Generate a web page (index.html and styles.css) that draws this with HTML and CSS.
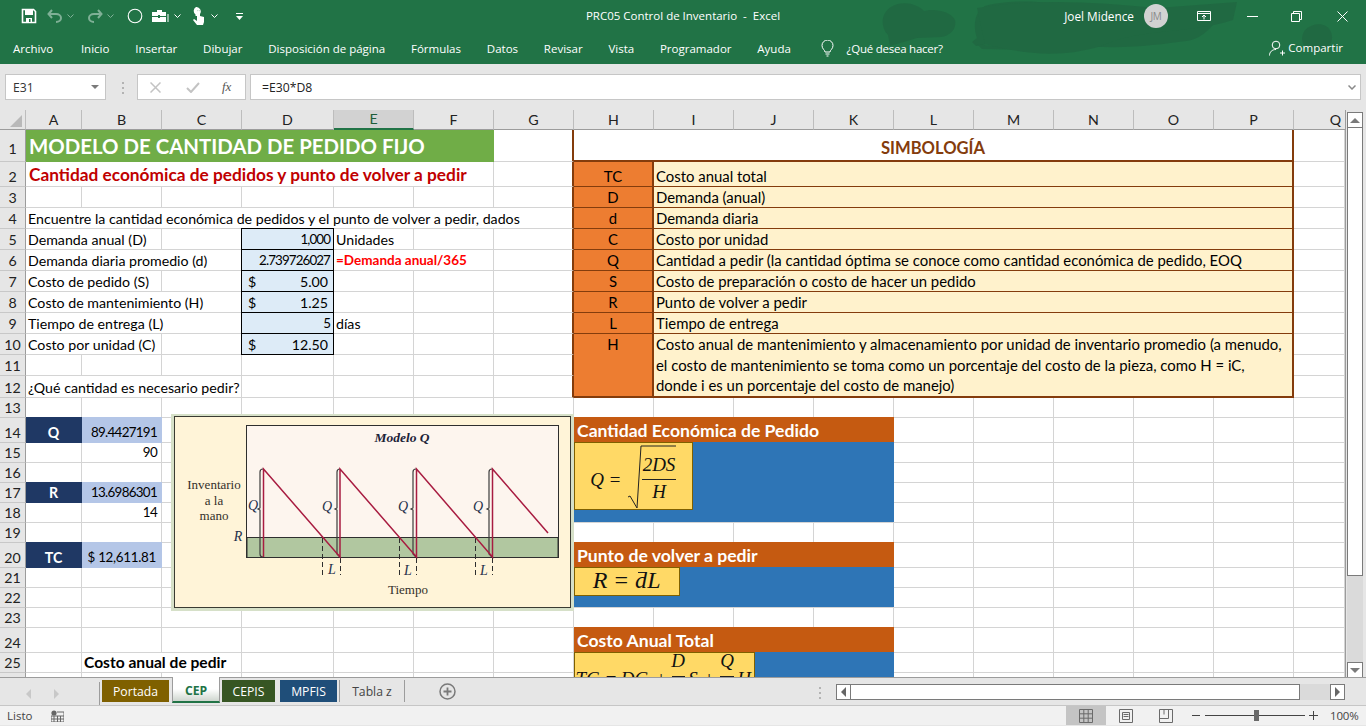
FILE: index.html
```html
<!DOCTYPE html>
<html lang="es">
<head>
<meta charset="utf-8">
<title>PRC05 Control de Inventario - Excel</title>
<link rel="stylesheet" href="styles.css">
</head>
<body>
<div class="app">
  <header class="ribbon">
    <svg class="texture" width="1366" height="64" viewBox="0 0 1366 64" aria-hidden="true">
      <path d="M888 35c-8-8-7-22 3-28 12-7 26-3 33 4 10-3 27 0 31 9 2 9-5 16-14 17l-24 1-27 8z"/>
      <path d="M977 38c-4-10-3-27 8-32 20-6 60-6 75 0 9 6 12 22 8 32l-2 9-30-5-40 1-20 3-4-4z"/>
      <path d="M977 44c20 4 50-1 80 0l8-10c10 9-6 16-28 16l-55-1z"/>
      <path d="M1070 44c30 4 60-6 88-22 14-8 28-18 42-6l22-5c-6 12-18 28-36 30-30 4-72 10-116 3z"/>
      <path d="M977 8c60-10 120-6 180 0l80-6-4 18c-44 14-92 8-132 26-44 14-86 6-116-2z"/>
      <path d="M1305 30c8-8 22-8 26 2 4 10-4 20-14 20-10 0-20-10-12-22z"/>
    </svg>
    <div class="titlebar">
      <div class="qat">
        <svg class="qat-save" width="16" height="16" viewBox="0 0 16 16"><path d="M1.5 1.5h11l2 2v11h-13z" fill="none" stroke="#fff" stroke-width="1.6"/><path d="M4 2h8v5H4zM5 10h6v5H5z" fill="#fff"/><path d="M8 11h1.5v3H8z" fill="#217346"/></svg>
        <svg class="qat-undo" width="16" height="14" viewBox="0 0 16 14"><path d="M5 1 1.5 5 5 9M2 5h7c3 0 5 2 5 4s-2 4-5 4" fill="none" stroke="#7fb096" stroke-width="2"/></svg>
        <svg class="chev" width="7" height="4" viewBox="0 0 7 4"><path d="M.5.5l3 3 3-3" fill="none" stroke="#7fb096"/></svg>
        <svg class="qat-redo" width="16" height="14" viewBox="0 0 16 14"><path d="M11 1l3.5 4L11 9M14 5H7C4 5 2 7 2 9s2 4 5 4" fill="none" stroke="#7fb096" stroke-width="2"/></svg>
        <svg class="chev" width="7" height="4" viewBox="0 0 7 4"><path d="M.5.5l3 3 3-3" fill="none" stroke="#7fb096"/></svg>
        <svg class="qat-circle" width="16" height="16" viewBox="0 0 16 16"><circle cx="8" cy="8" r="6.8" fill="none" stroke="#fff" stroke-width="1.1"/></svg>
        <svg class="qat-case" width="18" height="14" viewBox="0 0 18 14"><path d="M5 3V1h5v2M0 3h14v4H8V6H6v1H0zM0 8h6v1h2V8h6v5H0z" fill="#fff"/><path d="M15.5 5h1v8h-1z" fill="#fff"/></svg>
        <svg class="chev" width="7" height="4" viewBox="0 0 7 4"><path d="M.5.5l3 3 3-3" fill="none" stroke="#fff"/></svg>
        <svg class="qat-touch" width="14" height="18" viewBox="0 0 14 18"><path d="M5 0a4.5 4.5 0 0 1 4 7V4.500a1.500 1.500 0 0 0-3 0V9H4.500V7.500A4.500 4.500 0 0 1 5 0z" fill="#fff"/><path d="M6 4.500a1.500 1.500 0 0 1 3 0V9l4 1v5l-1 3H6L2 13l1-1 3 2z" fill="#fff"/></svg>
        <svg class="chev" width="7" height="4" viewBox="0 0 7 4"><path d="M.5.5l3 3 3-3" fill="none" stroke="#fff"/></svg>
        <svg class="qat-more" width="7" height="7" viewBox="0 0 7 7"><path d="M0 0h7v1H0zM0 3h7L3.500 7z" fill="#fff"/></svg>
      </div>
      <div class="doc-title">PRC05 Control de Inventario &nbsp;-&nbsp; Excel</div>
      <div class="win">
        <span class="user">Joel Midence</span>
        <span class="avatar">JM</span>
        <svg class="win-display" width="14" height="10" viewBox="0 0 14 10"><path d="M.5.5h13v9H.5zM.5 2.500h13M7 8.500V4.500M5 6l2-2 2 2" fill="none" stroke="#fff"/></svg>
        <svg class="win-min" width="11" height="1" viewBox="0 0 11 1"><path d="M0 0h11v1H0z" fill="#fff"/></svg>
        <svg class="win-max" width="11" height="11" viewBox="0 0 11 11"><path d="M.5 2.500h8v8h-8zM2.500 2.500v-2h8v8h-2" fill="none" stroke="#fff"/></svg>
        <svg class="win-close" width="11" height="11" viewBox="0 0 11 11"><path d="M.5.5l10 10M10.500.5l-10 10" stroke="#fff" fill="none"/></svg>
      </div>
    </div>
    <nav class="tabs">
      <span class="t-file">Archivo</span><span>Inicio</span><span>Insertar</span><span>Dibujar</span><span>Disposición de página</span><span>Fórmulas</span><span>Datos</span><span>Revisar</span><span>Vista</span><span>Programador</span><span>Ayuda</span>
      <svg class="bulb" width="13" height="17" viewBox="0 0 13 17"><path d="M4 12c0-2-3-3-3-6.500a5.500 5.500 0 0 1 11 0C12 9 9 10 9 12zM4.500 14h4M5.500 16h2" fill="none" stroke="#fff"/></svg>
      <span class="tell">¿Qué desea hacer?</span>
      <span class="share">
        <svg width="16" height="16" viewBox="0 0 16 16"><circle cx="7" cy="5" r="3.800" fill="none" stroke="#fff"/><path d="M.5 15.500c0-3.500 2.500-6 6.500-6M11 13h5M13.500 10.500v5" fill="none" stroke="#fff"/></svg>
        Compartir
      </span>
    </nav>
  </header>

  <div class="formula-bar">
    <div class="namebox"><span>E31</span><i class="down"></i></div>
    <div class="dots"><i></i><i></i><i></i></div>
    <div class="fx-buttons">
      <svg width="11" height="11" viewBox="0 0 11 11"><path d="M.5.5l10 10M10.500.5l-10 10" stroke="#c3c3c3" stroke-width="1.500" fill="none"/></svg>
      <svg width="14" height="11" viewBox="0 0 14 11"><path d="M1 6l4 4 8-9" stroke="#c3c3c3" stroke-width="2" fill="none"/></svg>
      <span class="fx">fx</span>
    </div>
    <div class="formula"><span>=E30*D8</span>
      <svg width="8" height="5" viewBox="0 0 8 5"><path d="M.5.5l3.500 3.500L7.500.5" stroke="#8a8a8a" stroke-width="1.500" fill="none"/></svg>
    </div>
  </div>

  <div class="workspace">
    <div class="sheet">
      <table class="grid">
        <colgroup><col class="c-rh"><col class="c-a"><col class="c-w"><col class="c-w"><col class="c-d"><col class="c-w"><col class="c-w"><col class="c-w"><col class="c-w"><col class="c-w"><col class="c-w"><col class="c-w"><col class="c-w"><col class="c-w"><col class="c-w"><col class="c-w"><col class="c-w"><col class="c-q"></colgroup>
        <tr class="r-hd">
          <th class="corner"><i></i></th><th>A</th><th>B</th><th>C</th><th>D</th><th class="sel">E</th><th>F</th><th>G</th><th>H</th><th>I</th><th>J</th><th>K</th><th>L</th><th>M</th><th>N</th><th>O</th><th>P</th><th class="q-h">Q</th>
        </tr>
        <tr class="r32"><th class="first">1</th><td colspan="6" class="title">MODELO DE CANTIDAD DE PEDIDO FIJO</td><td class="edge"></td><td colspan="9" class="sym-head">SIMBOLOGÍA</td><td></td></tr>
        <tr class="r25"><th>2</th><td colspan="6" class="subtitle">Cantidad económica de pedidos y punto de volver a pedir</td><td class="edge"></td><td class="sym">TC</td><td colspan="8" class="def">Costo anual total</td><td></td></tr>
        <tr class="r21"><th>3</th><td></td><td></td><td></td><td></td><td></td><td></td><td class="edge"></td><td class="sym">D</td><td colspan="8" class="def">Demanda (anual)</td><td></td></tr>
        <tr class="r21"><th>4</th><td colspan="7" class="txt edge">Encuentre la cantidad económica de pedidos y el punto de volver a pedir, dados</td><td class="sym">d</td><td colspan="8" class="def">Demanda diaria</td><td></td></tr>
        <tr class="r21"><th>5</th><td colspan="2" class="txt">Demanda anual (D)</td><td></td><td class="inp inp-top num">1,000</td><td class="txt">Unidades</td><td></td><td class="edge"></td><td class="sym">C</td><td colspan="8" class="def">Costo por unidad</td><td></td></tr>
        <tr class="r21"><th>6</th><td colspan="3" class="txt">Demanda diaria promedio (d)</td><td class="inp num">2.739726027</td><td colspan="2" class="note">=Demanda anual/365</td><td class="edge"></td><td class="sym">Q</td><td colspan="8" class="def">Cantidad a pedir (la cantidad óptima se conoce como cantidad económica de pedido, EOQ</td><td></td></tr>
        <tr class="r21"><th>7</th><td colspan="2" class="txt">Costo de pedido (S)</td><td></td><td class="inp acc"><span>$</span><span>5.00</span></td><td></td><td></td><td class="edge"></td><td class="sym">S</td><td colspan="8" class="def">Costo de preparación o costo de hacer un pedido</td><td></td></tr>
        <tr class="r21"><th>8</th><td colspan="3" class="txt">Costo de mantenimiento (H)</td><td class="inp acc"><span>$</span><span>1.25</span></td><td></td><td></td><td class="edge"></td><td class="sym">R</td><td colspan="8" class="def">Punto de volver a pedir</td><td></td></tr>
        <tr class="r21"><th>9</th><td colspan="3" class="txt">Tiempo de entrega (L)</td><td class="inp num">5</td><td class="txt">días</td><td></td><td class="edge"></td><td class="sym">L</td><td colspan="8" class="def">Tiempo de entrega</td><td></td></tr>
        <tr class="r21"><th>10</th><td colspan="2" class="txt">Costo por unidad (C)</td><td></td><td class="inp acc"><span>$</span><span>12.50</span></td><td></td><td></td><td class="edge"></td><td rowspan="3" class="sym sym-last">H</td><td colspan="8" rowspan="3" class="def def-last">Costo anual de mantenimiento y almacenamiento por unidad de inventario promedio (a menudo,<br>el costo de mantenimiento se toma como un porcentaje del costo de la pieza, como H = iC,<br>donde i es un porcentaje del costo de manejo)</td><td></td></tr>
        <tr class="r21"><th>11</th><td></td><td></td><td></td><td></td><td></td><td></td><td class="edge"></td><td></td></tr>
        <tr class="r22"><th>12</th><td colspan="3" class="txt">¿Qué cantidad es necesario pedir?</td><td></td><td></td><td></td><td class="edge"></td><td></td></tr>
        <tr class="r20"><th>13</th><td></td><td></td><td></td><td></td><td></td><td></td><td></td><td></td><td></td><td></td><td></td><td></td><td></td><td></td><td></td><td></td><td></td></tr>
        <tr class="r25"><th>14</th><td class="navy">Q</td><td class="pale num">89.4427191</td><td></td><td></td><td></td><td></td><td></td><td></td><td></td><td></td><td></td><td></td><td></td><td></td><td></td><td></td><td></td></tr>
        <tr class="r20"><th>15</th><td></td><td class="num">90</td><td></td><td></td><td></td><td></td><td></td><td></td><td></td><td></td><td></td><td></td><td></td><td></td><td></td><td></td><td></td></tr>
        <tr class="r20"><th>16</th><td></td><td></td><td></td><td></td><td></td><td></td><td></td><td></td><td></td><td></td><td></td><td></td><td></td><td></td><td></td><td></td><td></td></tr>
        <tr class="r20"><th>17</th><td class="navy">R</td><td class="pale num">13.6986301</td><td></td><td></td><td></td><td></td><td></td><td></td><td></td><td></td><td></td><td></td><td></td><td></td><td></td><td></td><td></td></tr>
        <tr class="r20"><th>18</th><td></td><td class="num">14</td><td></td><td></td><td></td><td></td><td></td><td></td><td></td><td></td><td></td><td></td><td></td><td></td><td></td><td></td><td></td></tr>
        <tr class="r20"><th>19</th><td></td><td></td><td></td><td></td><td></td><td></td><td></td><td></td><td></td><td></td><td></td><td></td><td></td><td></td><td></td><td></td><td></td></tr>
        <tr class="r25"><th>20</th><td class="navy">TC</td><td class="pale num money">$ 12,611.81</td><td></td><td></td><td></td><td></td><td></td><td></td><td></td><td></td><td></td><td></td><td></td><td></td><td></td><td></td><td></td></tr>
        <tr class="r20"><th>21</th><td></td><td></td><td></td><td></td><td></td><td></td><td></td><td></td><td></td><td></td><td></td><td></td><td></td><td></td><td></td><td></td><td></td></tr>
        <tr class="r20"><th>22</th><td></td><td></td><td></td><td></td><td></td><td></td><td></td><td></td><td></td><td></td><td></td><td></td><td></td><td></td><td></td><td></td><td></td></tr>
        <tr class="r20"><th>23</th><td></td><td></td><td></td><td></td><td></td><td></td><td></td><td></td><td></td><td></td><td></td><td></td><td></td><td></td><td></td><td></td><td></td></tr>
        <tr class="r25"><th>24</th><td></td><td></td><td></td><td></td><td></td><td></td><td></td><td></td><td></td><td></td><td></td><td></td><td></td><td></td><td></td><td></td><td></td></tr>
        <tr class="r20"><th>25</th><td></td><td colspan="2" class="txt strong">Costo anual de pedir</td><td></td><td></td><td></td><td></td><td></td><td></td><td></td><td></td><td></td><td></td><td></td><td></td><td></td><td></td></tr>
        <tr class="r20"><th>26</th><td></td><td></td><td></td><td class="cut">año</td><td></td><td></td><td></td><td></td><td></td><td></td><td></td><td></td><td></td><td></td><td></td><td></td><td></td></tr>
      </table>

      <figure class="qmodel">
        <svg width="403" height="197" viewBox="171 414 403 197">
          <rect x="172.500" y="415.500" width="400" height="194" fill="#fff4d8" stroke="#d6e0c8" stroke-width="3"/>
          <rect x="174.500" y="416.500" width="396" height="191" fill="#fff4d8" stroke="#3a3a32"/>
          <rect x="246.500" y="425.500" width="312" height="132" fill="#fdf5ee" stroke="#2e2e2e"/>
          <rect x="247" y="537.500" width="311" height="20" fill="#b1c7a0" stroke="#2e2e2e"/>
          <g class="serif">
            <text x="402" y="442" text-anchor="middle" class="bi">Modelo Q</text>
            <text x="214" y="489" text-anchor="middle">Inventario</text>
            <text x="214" y="505" text-anchor="middle">a la</text>
            <text x="214" y="520" text-anchor="middle">mano</text>
            <text x="238" y="541" text-anchor="middle" class="it">R</text>
            <text x="253" y="510" text-anchor="middle" class="it">Q</text>
            <text x="327" y="511" text-anchor="middle" class="it">Q</text>
            <text x="403" y="511" text-anchor="middle" class="it">Q</text>
            <text x="478" y="511" text-anchor="middle" class="it">Q</text>
            <text x="332" y="574" text-anchor="middle" class="it">L</text>
            <text x="408" y="575" text-anchor="middle" class="it">L</text>
            <text x="484" y="575" text-anchor="middle" class="it">L</text>
            <text x="408" y="594" text-anchor="middle">Tiempo</text>
          </g>
          <g fill="none" stroke="#3d3d3d" stroke-width="1.200">
            <path d="M263 469c-2 0-3 1-3 3v36l-2 1 2 1v44c0 2 1 3 3 3"/>
            <path d="M340 469c-2 0-3 1-3 3v36l-2 1 2 1v44l3 3"/>
            <path d="M416 469c-2 0-3 1-3 3v36l-2 1 2 1v44l3 3"/>
            <path d="M492 469c-2 0-3 1-3 3v36l-2 1 2 1v44l3 3"/>
          </g>
          <g fill="none" stroke="#2e2e2e" stroke-width="1" stroke-dasharray="5 3">
            <path d="M322.500 538v37M399.500 538v37M475.500 538v37M340.500 558v17M416.500 558v17M492.500 558v17"/>
          </g>
          <g fill="none" stroke="#a81c41" stroke-width="1.500">
            <path d="M263.500 557V469L340 557V469L416.500 557V469L492.500 557V469L548 533"/>
          </g>
        </svg>
      </figure>

      <section class="panel p-eoq">
        <h3>Cantidad Económica de Pedido</h3>
        <div class="eq eq-q">
          <svg width="119" height="68" viewBox="574 442 119 68">
            <g class="math">
              <text x="597" y="486" text-anchor="middle">Q</text>
              <text x="615" y="486" text-anchor="middle">=</text>
              <text x="659" y="471" text-anchor="middle">2DS</text>
              <text x="659" y="498" text-anchor="middle">H</text>
            </g>
            <path d="M628 497l2-1 7 12 4-62h35" fill="none" stroke="#222" stroke-width="1"/>
            <path d="M642 479.500h34" stroke="#222" stroke-width="1"/>
          </svg>
        </div>
      </section>

      <section class="panel p-rop">
        <h3>Punto de volver a pedir</h3>
        <div class="eq eq-r">
          <svg width="106" height="29" viewBox="574 567 106 29">
            <g class="math large">
              <text x="600" y="588" text-anchor="middle">R</text>
              <text x="621" y="588" text-anchor="middle">=</text>
              <text x="641" y="588" text-anchor="middle">d</text>
              <text x="654" y="588" text-anchor="middle">L</text>
            </g>
            <path d="M638 572.500h7" stroke="#222"/>
          </svg>
        </div>
      </section>

      <section class="panel p-tc">
        <h3>Costo Anual Total</h3>
        <div class="eq eq-tc">
          <svg width="181" height="30" viewBox="574 652 181 30">
            <g class="math">
              <text x="587" y="685" text-anchor="middle">TC</text>
              <text x="611" y="685" text-anchor="middle">=</text>
              <text x="634" y="685" text-anchor="middle">DC</text>
              <text x="661" y="685" text-anchor="middle">+</text>
              <text x="678" y="667" text-anchor="middle">D</text>
              <text x="693" y="685" text-anchor="middle">S</text>
              <text x="709" y="685" text-anchor="middle">+</text>
              <text x="727" y="667" text-anchor="middle">Q</text>
              <text x="744" y="685" text-anchor="middle">H</text>
            </g>
            <path d="M672 676.500h13M720 676.500h14" stroke="#222"/>
          </svg>
        </div>
      </section>
    </div>

    <aside class="vscroll">
      <button class="sb-btn sb-up"><i></i></button>
      <div class="sb-thumb"></div>
      <div class="sb-track"></div>
      <button class="sb-btn sb-down"><i></i></button>
    </aside>
  </div>

  <div class="tabbar">
    <div class="tab-nav"><i class="tri-l"></i><i class="tri-r"></i></div>
    <div class="sheet-tabs">
      <span class="tab t-portada">Portada</span>
      <span class="tab t-cep">CEP</span>
      <span class="tab t-cepis">CEPIS</span>
      <span class="tab t-mpfis">MPFIS</span>
      <span class="tab t-tabla">Tabla z</span>
    </div>
    <svg class="add" width="17" height="17" viewBox="0 0 17 17"><circle cx="8.500" cy="8.500" r="7.500" fill="none" stroke="#7a7a7a" stroke-width="1.500"/><path d="M4.500 8.500h8M8.500 4.500v8" stroke="#7a7a7a" stroke-width="1.800"/></svg>
    <div class="dots dots-tab"><i></i><i></i><i></i></div>
    <div class="hscroll">
      <button class="hb"><i class="tri-l dark"></i></button>
      <div class="h-thumb"></div>
      <div class="h-rest"></div>
      <button class="hb"><i class="tri-r dark"></i></button>
    </div>
  </div>

  <footer class="status">
    <span class="ready">Listo</span>
    <svg class="macro" width="13" height="12" viewBox="0 0 13 12"><circle cx="3" cy="3" r="2.600" fill="#666"/><path d="M6 2h7v10H0V6h13M3 6v6M6.500 6v6M9.500 6v6M0 9h13" fill="none" stroke="#666"/></svg>
    <div class="views">
      <span class="view on"><svg width="14" height="14" viewBox="0 0 14 14"><path d="M.5.5h13v13H.5zM.5 4.800h13M.5 9.200h13M4.800.5v13M9.200.5v13" fill="none" stroke="#6a6a6a"/></svg></span>
      <span class="view"><svg width="14" height="14" viewBox="0 0 14 14"><path d="M.5.5h13v13H.5zM3.500 3.500h7v7h-7zM4.500 5.500h5M4.500 7.500h5" fill="none" stroke="#6a6a6a"/></svg></span>
      <span class="view"><svg width="14" height="14" viewBox="0 0 14 14"><path d="M.5.5h13v13H.5zM.5 9.500h9v-9" fill="none" stroke="#6a6a6a"/><path d="M5 .5v5" stroke="#6a6a6a"/></svg></span>
    </div>
    <div class="zoom">
      <b class="z-minus"></b>
      <div class="z-track"><b class="z-thumb"></b></div>
      <b class="z-plus"></b>
      <span class="z-val">100%</span>
    </div>
  </footer>
</div>
</body>
</html>
```

FILE: styles.css
```css
* { box-sizing: border-box; }
html, body { margin: 0; padding: 0; }
body { font-family: "Open Sans", "Noto Sans", sans-serif; background: #e6e6e6; color: #000; }
.app { width: 1366px; height: 726px; display: flex; flex-direction: column; overflow: hidden; }

/* ribbon */
.ribbon { position: relative; height: 64px; background: #217346; color: #fff; font-size: 11.5px; flex: none; overflow: hidden; }
.texture { position: absolute; left: 0; top: 0; fill: #206842; opacity: .85; }
.titlebar { position: relative; display: flex; align-items: center; height: 32px; }
.qat { display: flex; align-items: center; width: 260px; padding-left: 21px; }
.qat-save { margin-right: 10px; }
.qat-undo { margin-right: 4px; }
.qat-redo { margin: 0 0 0 13px; }
.qat-redo + .chev { margin-left: 4px; }
.qat-circle { margin-left: 13px; }
.qat-case { margin-left: 9px; }
.qat-case + .chev { margin-left: 4px; }
.qat-touch { margin-left: 10px; }
.qat-touch + .chev { margin-left: 6px; }
.qat-more { margin-left: 18px; }
.chev { flex: none; }
.doc-title { position: absolute; left: 0; right: 0; top: 8px; text-align: center; font-size: 11.5px; line-height: 16px; }
.win { position: relative; margin-left: auto; display: flex; align-items: center; height: 32px; }
.user { font-size: 11.8px; margin-right: 10px; }
.avatar { width: 24px; height: 24px; border-radius: 50%; background: #d2d2d2; color: #8a8a8a; font-size: 10px; display: flex; align-items: center; justify-content: center; letter-spacing: -.3px; }
.win-display { margin-left: 29px; }
.win-min { margin-left: 36px; }
.win-max { margin-left: 33px; }
.win-close { margin-left: 35px; margin-right: 18px; }
.tabs { position: relative; display: flex; align-items: center; height: 32px; padding-left: 13px; gap: 25.8px; }
.t-file { margin-right: 2px; }
.bulb { margin-left: 4px; margin-right: -12.8px; }
.tell { letter-spacing: -.25px; }
.share { position: absolute; right: 23px; top: 8px; display: flex; align-items: center; gap: 3px; line-height: 16px; }

/* formula bar */
.formula-bar { height: 46px; flex: none; background: #e6e6e6; display: flex; align-items: flex-start; padding: 10px 5px 0; font-size: 12.2px; }
.namebox { width: 101px; height: 26px; background: #fff; border: 1px solid #c6c6c6; display: flex; align-items: center; justify-content: space-between; padding: 0 6px 0 7px; color: #333; }
.down { width: 0; height: 0; border-left: 4px solid transparent; border-right: 4px solid transparent; border-top: 4px solid #7a7a7a; }
.dots { display: flex; flex-direction: column; gap: 3px; width: 2px; margin: 8px 13px 0 16px; }
.dots i { width: 2px; height: 2px; background: #b3b3b3; }
.fx-buttons { width: 109px; height: 26px; background: #fff; border: 1px solid #c6c6c6; display: flex; align-items: center; padding-left: 12px; gap: 25px; }
.fx { font-family: "Liberation Serif", serif; font-style: italic; font-size: 13px; color: #555; margin-left: -3px; }
.formula { flex: 1; margin-left: 4px; height: 26px; background: #fff; border: 1px solid #c6c6c6; display: flex; align-items: center; justify-content: space-between; padding: 0 4px 0 11px; color: #222; }

/* sheet */
.workspace { display: flex; height: 568px; flex: none; }
.sheet { position: relative; width: 1346px; height: 568px; overflow: hidden; background: #fff; border-right: 1px solid #9c9c9c; border-bottom: 1px solid #9c9c9c; flex: none; }
.grid { table-layout: fixed; width: 1345px; border-collapse: separate; border-spacing: 0; font-family: Lato, "Liberation Sans", sans-serif; font-size: 14.2px; }
.c-rh { width: 26px; } .c-a { width: 56px; } .c-w { width: 80px; } .c-d { width: 92px; } .c-q { width: 51px; }
.grid td, .grid th { padding: 0; border-right: 1px solid #d4d4d4; border-bottom: 1px solid #d4d4d4; vertical-align: bottom; white-space: nowrap; line-height: 19px; overflow: visible; }
.grid th { background: #e6e6e6; font-weight: 400; text-align: center; color: #222; border-right-color: #9c9c9c; border-bottom-color: #c8c8c8; }
.r-hd { height: 20px; }
.grid .r-hd th { border-right-color: #bdbdbd; border-bottom: 1px solid #9c9c9c; vertical-align: middle; line-height: 18px; }
.grid .r-hd .sel { background: #d2d2d2; border-bottom: 2px solid #217346; color: #1d5c39; }
.grid .r-hd .q-h { text-align: right; padding-right: 4px; border-right: 0; }
.corner { position: relative; }
.corner i { position: absolute; right: 3px; bottom: 2px; width: 0; height: 0; border-left: 12px solid transparent; border-bottom: 12px solid #b9b9b9; }
.r20 { height: 20px; } .r21 { height: 21px; } .r22 { height: 22px; } .r25 { height: 25px; } .r32 { height: 32px; }
.grid .first { padding-bottom: 3px; }

.grid .title { background: #70ad47; color: #fff; font-weight: 700; font-size: 20.4px; padding-left: 3px; line-height: 30px; vertical-align: middle; border-color: #70ad47; }
.grid .subtitle { color: #c00000; font-weight: 700; font-size: 17.3px; padding-left: 3px; line-height: 22px; }
.grid .txt { padding-left: 2px; }
.grid .strong { font-weight: 700; font-size: 15.6px; }
.grid .num { text-align: right; padding-right: 4px; font-size: 13.4px; letter-spacing: -.7px; }
.grid .inp { background: #ddebf7; border-right: 1px solid #000; border-bottom: 1px solid #000; box-shadow: -1px 0 0 #000; }
.grid .inp-top { box-shadow: -1px 0 0 #000, 0 -1px 0 #000, -1px -1px 0 #000; }
.grid .inp.num { letter-spacing: -.9px; padding-right: 3px; }
.grid .acc { padding: 0 5px 0 6px; }
.acc span:last-child { float: right; }
.grid .note { color: #ff0000; font-weight: 700; font-size: 13.5px; padding-left: 2px; }
.grid .navy { background: #1f3864; color: #fff; font-weight: 700; text-align: center; border-color: #1f3864; box-shadow: 0 -1px 0 #1f3864; }
.grid .pale { background: #b4c6e7; border-color: #b4c6e7; box-shadow: 0 -1px 0 #b4c6e7; }
.grid .money { padding-right: 5px; letter-spacing: -.3px; }
.grid .cut { padding-left: 11px; }

/* symbol table */
.grid .edge { border-right: 2px solid #843c0c; }
.grid .sym-head { text-align: center; color: #843c0c; font-weight: 700; font-size: 16.6px; vertical-align: middle; border-right: 2px solid #843c0c; border-bottom: 2px solid #843c0c; padding-top: 6px; }
.grid .sym { background: #ed7d31; text-align: center; font-size: 14.9px; border-right: 2px solid #843c0c; border-bottom: 1px solid #843c0c; }
.grid .def { background: #fff2cc; padding-left: 2px; font-size: 14.9px; border-right: 2px solid #843c0c; border-bottom: 1px solid #843c0c; }
.grid .sym-last { vertical-align: top; border-bottom: 2px solid #843c0c; line-height: 20.6px; }
.grid .def-last { border-bottom: 2px solid #843c0c; line-height: 20.6px; vertical-align: top; }

/* floating objects */
.qmodel { position: absolute; left: 171px; top: 304px; margin: 0; width: 403px; height: 197px; }
.qmodel svg { display: block; }
.serif text { font-family: "Liberation Serif", serif; font-size: 13px; fill: #33302a; }
.serif .it { font-style: italic; font-size: 14px; fill: #25304a; }
.serif .bi { font-style: italic; font-weight: 700; font-size: 13.5px; fill: #1c2238; }

.panel { position: absolute; left: 574px; width: 320px; background: #2e75b6; }
.panel h3 { margin: 0; height: 25px; background: #c55a11; color: #fff; font: 700 17.6px/27px Lato, "Liberation Sans", sans-serif; padding-left: 3px; }
.p-eoq { top: 307px; height: 105px; }
.p-rop { top: 432px; height: 65px; }
.p-tc { top: 517px; height: 60px; }
.eq { background: #ffd966; border: 1px solid #7f6000; overflow: hidden; }
.eq svg { display: block; margin: -1px; }
.eq-q { width: 119px; height: 68px; }
.eq-r { width: 106px; height: 29px; }
.eq-tc { width: 181px; height: 36px; }
.math text { font-family: "Liberation Serif", serif; font-style: italic; font-size: 19px; fill: #111; }
.math.large text { font-size: 24px; }

/* v scrollbar */
.vscroll { width: 20px; flex: none; display: flex; flex-direction: column; padding: 2px 3px 0 1px; background: #e6e6e6; }
.sb-btn { display: flex; align-items: center; justify-content: center; height: 16px; width: 16px; padding: 0; background: #fff; border: 1px solid #7a7a7a; flex: none; }
.sb-up i { width: 0; height: 0; border-left: 5px solid transparent; border-right: 5px solid transparent; border-bottom: 5px solid #7a7a7a; }
.sb-down i { width: 0; height: 0; border-left: 5px solid transparent; border-right: 5px solid transparent; border-top: 5px solid #7a7a7a; }
.sb-thumb { height: 448px; background: #fff; border: 1px solid #7a7a7a; border-top: 0; flex: none; width: 16px; }
.sb-track { flex: 1; background: #dadada; width: 16px; }

/* sheet tabs */
.tabbar { position: relative; height: 28px; flex: none; background: #e6e6e6; display: flex; align-items: flex-start; border-top: 1px solid #9c9c9c; margin-top: -1px; font-size: 12.2px; }
.tab-nav { display: flex; align-items: center; width: 100px; height: 24px; padding-left: 26px; gap: 23px; margin-top: 4px; border-right: 1px solid #9c9c9c; }
.tri-l { width: 0; height: 0; border-top: 5px solid transparent; border-bottom: 5px solid transparent; border-right: 5px solid #c8c8c8; }
.tri-r { width: 0; height: 0; border-top: 5px solid transparent; border-bottom: 5px solid transparent; border-left: 5px solid #c8c8c8; }
.tri-l.dark { border-right-color: #666; }
.tri-r.dark { border-left-color: #666; }
.sheet-tabs { display: flex; align-items: flex-start; margin-left: 2px; margin-top: 2px; }
.tab { display: flex; align-items: center; justify-content: center; height: 22px; color: #fff; }
.t-portada { width: 67px; background: #7f6000; }
.t-cep { position: relative; width: 48px; height: 26px; margin: -3px 2px 0 3px; padding-top: 2px; color: #217346; font-weight: 700; background: linear-gradient(#fff 50%, #cfd6cf); border: 1px solid #9c9c9c; border-bottom: 2px solid #217346; border-top: 0; }
.t-cepis { width: 53px; background: #375623; }
.t-mpfis { width: 57px; margin-left: 5px; background: #1f4e79; }
.t-tabla { width: 66px; margin-left: 2px; color: #444; background: transparent; border-left: 1px solid #9c9c9c; border-right: 1px solid #9c9c9c; }
.add { position: absolute; left: 439px; top: 5px; }
.dots-tab { position: absolute; left: 819px; top: 9px; margin: 0; }
.hscroll { position: absolute; left: 836px; top: 6px; width: 509px; height: 16px; display: flex; background: #dadada; }
.hb { width: 15px; height: 16px; padding: 0; background: #fff; border: 1px solid #7a7a7a; display: flex; align-items: center; justify-content: center; flex: none; }
.h-thumb { width: 449px; background: #fff; border: 1px solid #7a7a7a; border-left: 0; }
.h-rest { flex: 1; }

/* status */
.status { position: relative; height: 20px; flex: none; background: #f1f1f1; border-top: 1px solid #c6c6c6; display: flex; align-items: center; font-size: 11.5px; color: #444; }
.ready { margin-left: 7px; width: 44px; }
.macro { flex: none; }
.views { position: absolute; left: 1066px; top: 0; height: 19px; display: flex; }
.view { width: 40px; height: 19px; display: flex; align-items: center; justify-content: center; }
.view.on { background: #c4c4c4; }
.zoom { position: absolute; left: 1192px; top: 0; height: 19px; display: flex; align-items: center; }
.z-minus { width: 8px; height: 1px; background: #444; margin-right: 5px; }
.z-track { position: relative; width: 100px; height: 1px; background: #444; }
.z-thumb { position: absolute; left: 49px; top: -5px; width: 5px; height: 11px; background: #6a6a6a; }
.z-plus { position: relative; width: 9px; height: 1px; background: #444; margin-left: 4px; }
.z-plus::after { content: ""; position: absolute; left: 4px; top: -4px; width: 1px; height: 9px; background: #444; }
.z-val { margin-left: 12px; letter-spacing: -.2px; }
```
